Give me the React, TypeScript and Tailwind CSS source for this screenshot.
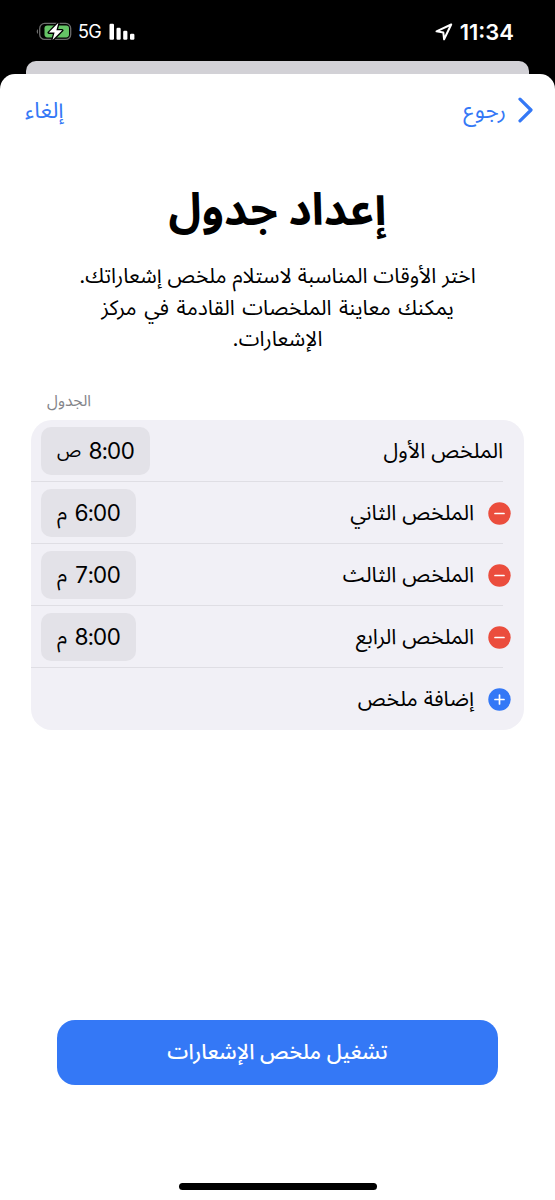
interface Summary {
  label: string
  hour?: string
  period?: string
  action?: "remove" | "add"
}

const summaries: Summary[] = [
  { label: "الملخص الأول", hour: "8:00", period: "ص" },
  { label: "الملخص الثاني", hour: "6:00", period: "م", action: "remove" },
  { label: "الملخص الثالث", hour: "7:00", period: "م", action: "remove" },
  { label: "الملخص الرابع", hour: "8:00", period: "م", action: "remove" },
  { label: "إضافة ملخص", action: "add" },
]

const StatusBar = () => (
  <div dir="ltr" className="flex h-[61px] items-center justify-between pt-[2px] pl-9 pr-[41px] text-white">
    <div className="flex items-center">
      <svg width="36" height="19" viewBox="0 0 36 19" fill="none">
        <path d="M2 7.2C.3 7.8.3 11.2 2 11.8Z" fill="#6b6b6b" />
        <rect x="3.7" y="1.4" width="31" height="16" rx="5" stroke="#6b6b6b" strokeWidth="1.3" />
        <rect x="8.5" y="3.4" width="24.5" height="12" rx="2.8" fill="#65c466" />
        <path
          d="M22.4.8 12.8 10.6h5.8L16.5 18 26.2 8.3h-5.8Z"
          fill="#fff"
          stroke="#000"
          strokeWidth="2.6"
          strokeLinejoin="round"
          paintOrder="stroke"
        />
      </svg>
      <span className="ml-[6px] text-[18px] leading-6 tracking-[-0.6px]">5G</span>
      <svg className="ml-[8px]" width="27" height="18" viewBox="0 0 27 18" fill="#fff">
        <rect x="0.5" y="0.8" width="4.5" height="16" rx="1.2" />
        <rect x="7.5" y="4.8" width="4.2" height="12" rx="1.2" />
        <rect x="14.2" y="7.8" width="4.2" height="9" rx="1.2" />
        <rect x="21" y="10.8" width="4.4" height="6" rx="1.2" />
      </svg>
    </div>
    <div className="flex items-center">
      <svg width="18" height="18" viewBox="0 0 18 18" fill="none">
        <path d="M16.2 1.5 1.5 8.3l6.8 1.1.8 6.9Z" stroke="#fff" strokeWidth="2" strokeLinejoin="round" />
      </svg>
      <span className="ml-[7px] text-[22px] font-semibold leading-6">11:34</span>
    </div>
  </div>
)

const ActionIcon = ({ action }: { action: "remove" | "add" }) => (
  <svg
    className={action === "add" ? "text-[#3478f6]" : "text-[#eb4d3d]"}
    width="23"
    height="23"
    viewBox="0 0 23 23"
  >
    <circle cx="11.5" cy="11.5" r="11.2" fill="currentColor" />
    <path
      d={action === "add" ? "M7 11.5h9M11.5 7v9" : "M7 11.5h9"}
      stroke="#fff"
      strokeWidth="1.7"
      strokeLinecap="round"
    />
  </svg>
)

const SummaryRow = ({ label, hour, period, action }: Summary) => (
  <div className="flex h-[62.2px] pr-[13px]">
    {action && (
      <div className="flex w-[37px] shrink-0 items-center pt-px">
        <ActionIcon action={action} />
      </div>
    )}
    <div className={action ? "flex flex-1 items-center" : "flex flex-1 items-center pr-2"}>
      <span className="text-[21.3px] whitespace-nowrap">{label}</span>
    </div>
    {hour && (
      <div className="flex items-center pl-[10px]">
        <div className="flex h-12 items-center gap-[7px] rounded-[10px] bg-[#e3e2e8] px-4">
          <span className="text-[22.5px] tracking-[-1px] tabular-nums">{hour}</span>
          <span className={period === "ص" ? "text-[18.5px]" : "text-[21px]"}>{period}</span>
        </div>
      </div>
    )}
  </div>
)

export default function App() {
  return (
    <div
      dir="rtl"
      className="flex h-[1200px] w-[555px] flex-col overflow-hidden bg-black text-black font-[Inter,'Noto_Sans_Arabic','Noto_Sans','DejaVu_Sans',sans-serif]"
    >
      <StatusBar />
      <div className="mx-[26px] h-[13px] shrink-0 rounded-t-[10px] bg-[#d2d1d6]" />
      <main className="flex flex-1 flex-col rounded-t-[15px] bg-white">
        <nav className="flex h-[72px] items-center justify-between pr-[21px] pl-[25px] text-[22.5px] text-[#3478f6]">
          <button className="flex items-center gap-[11px]">
            <svg width="17" height="26" viewBox="0 0 17 26" fill="none">
              <path d="M3 2.2 14 13 3 23.8" stroke="currentColor" strokeWidth="3.2" strokeLinecap="round" strokeLinejoin="round" />
            </svg>
            <span>رجوع</span>
          </button>
          <button>إلغاء</button>
        </nav>

        <h1 className="mt-[28px] h-[70px] text-center text-[44.8px] font-bold leading-[70px] whitespace-nowrap">إعداد جدول</h1>
        <p className="mt-[16px] text-center text-[21px] leading-[31.5px] whitespace-nowrap">
          اختر الأوقات المناسبة لاستلام ملخص إشعاراتك.
          <br />
          <span className="[word-spacing:1.6px]">يمكنك معاينة الملخصات القادمة في مركز</span>
          <br />
          الإشعارات.
        </p>

        <div className="mt-[30px] flex h-[32px] items-center justify-end pl-[47px] text-[15.7px] text-[#85858a]">الجدول</div>
        <ul className="mx-[31px] mt-[3px] flex h-[310px] flex-col rounded-[21px] bg-[#f1f0f6]">
          {summaries.map((item, index) => (
            <li key={index}>
              <SummaryRow {...item} />
              {index < summaries.length - 1 && <div className="-mt-px mr-[21px] h-px bg-[#dfdee4]" />}
            </li>
          ))}
        </ul>

        <button className="mx-[57px] mt-auto mb-[98px] h-[65px] shrink-0 rounded-[18px] bg-[#3478f6] pb-[2px] text-[21.2px] font-medium text-white">
          تشغيل ملخص الإشعارات
        </button>
        <div className="mb-[10px] h-[7px] w-[198px] shrink-0 self-center rounded-full bg-black" />
      </main>
    </div>
  )
}
